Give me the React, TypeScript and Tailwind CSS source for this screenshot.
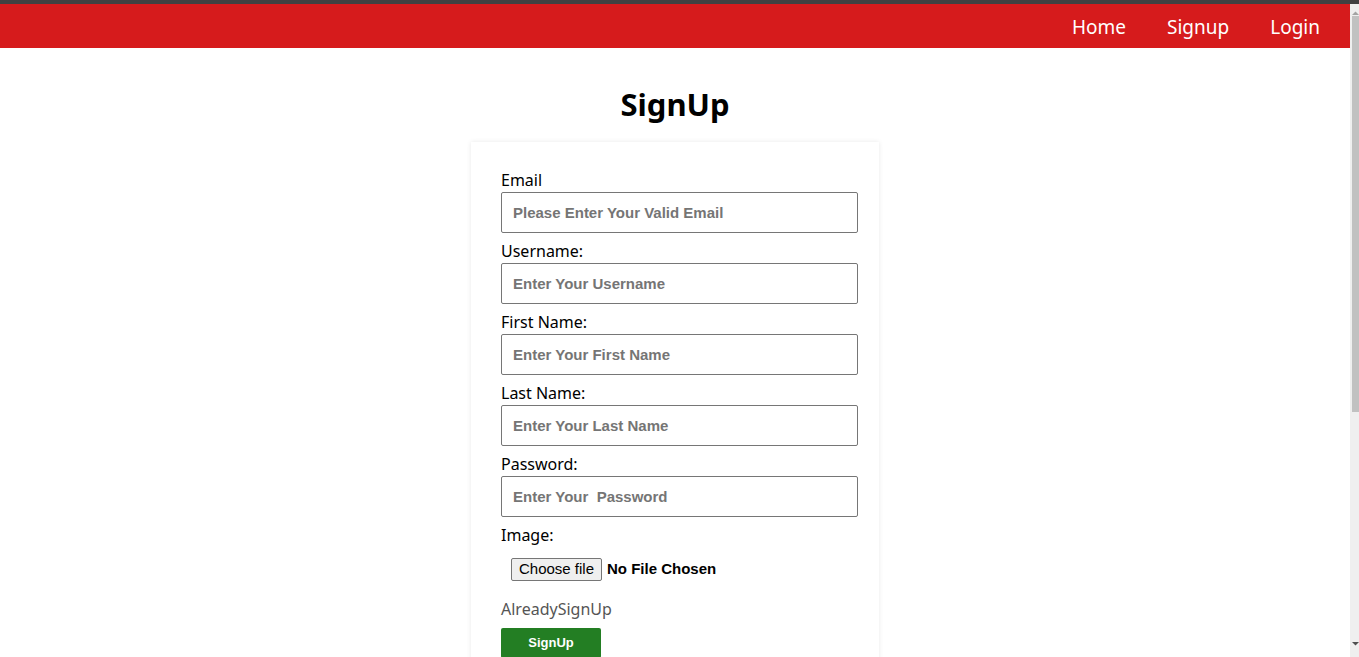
import React from 'react';

const fields = [
  { label: 'Email', placeholder: 'Please Enter Your Valid Email', type: 'email' },
  { label: 'Username:', placeholder: 'Enter Your Username', type: 'text' },
  { label: 'First Name:', placeholder: 'Enter Your First Name', type: 'text' },
  { label: 'Last Name:', placeholder: 'Enter Your Last Name', type: 'text' },
  { label: 'Password:', placeholder: 'Enter Your  Password', type: 'password' },
];

const App: React.FC = () => {
  return (
    <div className="h-screen flex flex-col overflow-hidden bg-white font-['Noto_Sans',sans-serif]">
      {/* window strip */}
      <div className="h-[4px] bg-[#414141] shrink-0" />

      <div className="flex flex-1 min-h-0">
        <div className="flex-1 min-w-0 overflow-hidden">
          {/* Navbar */}
          <nav className="h-[44px] bg-[#d61b1c] flex items-center justify-end gap-[41px] pr-[30px] pt-[2px] text-white text-[19px]">
            <a href="#" className="leading-none">Home</a>
            <a href="#" className="leading-none">Signup</a>
            <a href="#" className="leading-none">Login</a>
          </nav>

          <h1 className="text-center font-bold text-[31px] leading-[40px] mt-[36px] text-black">SignUp</h1>

          {/* Card */}
          <div className="mx-auto mt-[18px] w-[408px] bg-white shadow-[0_0_5px_rgba(0,0,0,0.09)] pl-[30px] pr-[21px] pt-[26px] pb-[30px]">
            {fields.map((f) => (
              <div key={f.label} className="mb-[6px]">
                <label className="block text-[16px] leading-[24px] text-black">{f.label}</label>
                <input
                  type={f.type}
                  placeholder={f.placeholder}
                  className="w-[357px] h-[41px] border border-[#767676] rounded-[2px] px-[11px] font-['Liberation_Sans',Arial,sans-serif] font-bold text-[15px] placeholder:text-[#757575] outline-none"
                />
              </div>
            ))}

            <label className="block text-[16px] leading-[24px] text-black">Image:</label>
            <div className="flex items-center pl-[10px] mt-[11px] font-['Liberation_Sans',Arial,sans-serif] text-[15px]">
              <span className="h-[23px] w-[91px] flex items-center justify-center bg-[#efefef] border border-[#767676] rounded-[2px] text-black">
                Choose file
              </span>
              <span className="ml-[5px] font-bold text-black">No File Chosen</span>
            </div>

            <div className="mt-[16px] text-[16px] leading-[24px] text-[#555555]">AlreadySignUp</div>

            <button className="mt-[7px] w-[100px] h-[30px] bg-[#237e23] rounded-[2px] text-white font-['Liberation_Sans',Arial,sans-serif] font-bold text-[13px]">
              SignUp
            </button>
          </div>
        </div>

        {/* scrollbar */}
        <div className="w-[9px] shrink-0 bg-[#efefef] flex flex-col items-end">
          <svg width="7" height="12" viewBox="0 0 7 12" className="shrink-0">
            <path d="M0 11 L3.5 7.5 L7 11 Z" fill="#a3a3a3" />
          </svg>
          <div className="w-[7px] h-[396px] bg-[#c1c1c1]" />
          <div className="flex-1" />
          <svg width="7" height="12" viewBox="0 0 7 12" className="shrink-0 mb-[4px]">
            <path d="M0 1 L3.5 4.5 L7 1 Z" fill="#505050" />
          </svg>
        </div>
      </div>
    </div>
  );
};

export default App;
